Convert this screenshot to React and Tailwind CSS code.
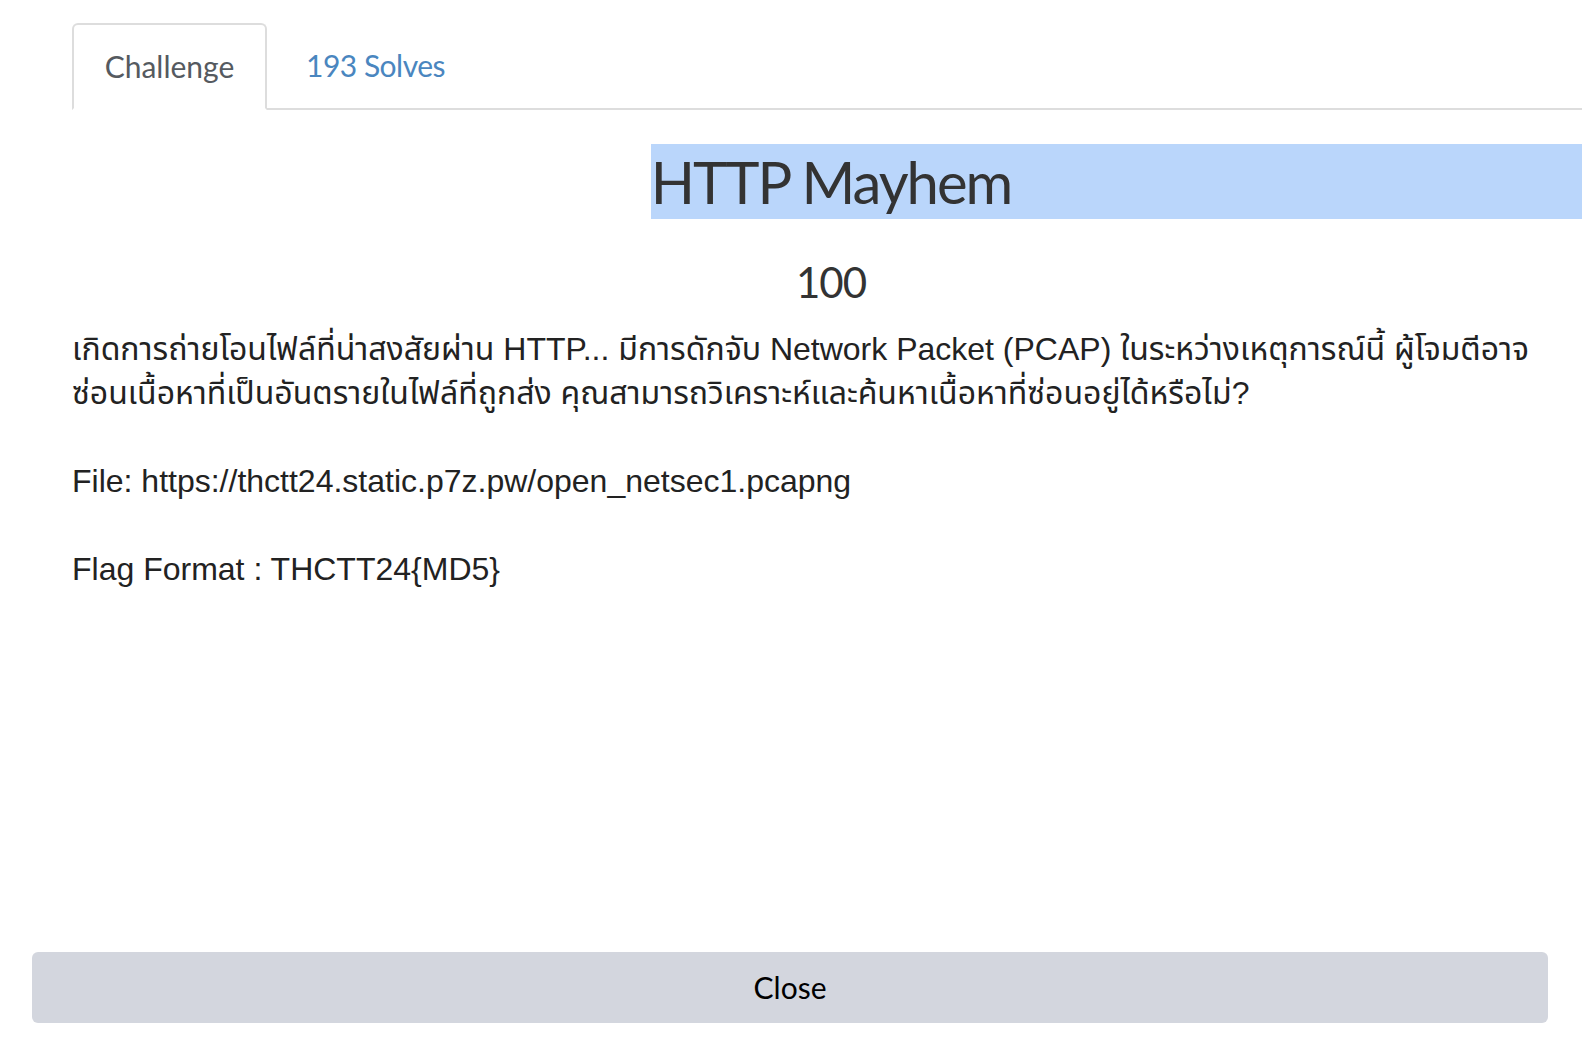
import React from "react";

const HEAD_FONT = { fontFamily: "Lato, 'Open Sans', sans-serif" };

export default function App() {
  return (
    <div className="flex h-[1046px] w-full flex-col overflow-hidden bg-white text-[#333333]">
      <div className="ml-[72px] w-[1518px] shrink-0 pt-[23px]">
        {/* tabs */}
        <div className="flex border-b-2 border-[#dddddd] font-['Lato','Open_Sans',sans-serif] text-[30px]">
          <div className="-mb-[2px] flex h-[87px] w-[195px] items-center justify-center rounded-t-[6px] border-2 border-[#dddddd] border-b-white bg-white text-[#555a60]">
            Challenge
          </div>
          <div className="flex h-[85px] items-center px-[39px] tracking-[-0.5px] text-[#4a86bf]">193 Solves</div>
        </div>

        {/* title, selected */}
        <h1 className="mt-[34px] grid grid-cols-[1fr_auto_1fr] text-[58px] leading-[75px] tracking-[-2px] font-normal text-[#333333]" style={HEAD_FONT}>
          <span />
          <span className="bg-[#bad6fb]">HTTP Mayhem</span>
          <span className="bg-[#bad6fb]" />
        </h1>

        <div className="mt-[34px] text-center text-[42px] leading-[58px] tracking-[-1px]" style={HEAD_FONT}>
          100
        </div>

        <div className="mt-[16px] font-['Liberation_Sans','Noto_Sans_Thai','Noto_Sans',sans-serif] text-[32px] leading-[44px] text-[#222222]">
          <p>
            เกิดการถ่ายโอนไฟล์ที่น่าสงสัยผ่าน HTTP... มีการดักจับ Network Packet (PCAP) ในระหว่างเหตุการณ์นี้ ผู้โจมตีอาจ
            <br />
            ซ่อนเนื้อหาที่เป็นอันตรายในไฟล์ที่ถูกส่ง คุณสามารถวิเคราะห์และค้นหาเนื้อหาที่ซ่อนอยู่ได้หรือไม่?
          </p>
          <p className="mt-[44px]">File: https://thctt24.static.p7z.pw/open_netsec1.pcapng</p>
          <p className="mt-[44px]">Flag Format : THCTT24{"{"}MD5{"}"}</p>
        </div>
      </div>

      <div className="mt-auto px-[32px] pb-[23px]">
        <button
          type="button"
          className="flex h-[71px] w-[1516px] items-center justify-center rounded-[6px] bg-[#d3d6de] text-[30px] text-black"
          style={HEAD_FONT}
        >
          Close
        </button>
      </div>
    </div>
  );
}
